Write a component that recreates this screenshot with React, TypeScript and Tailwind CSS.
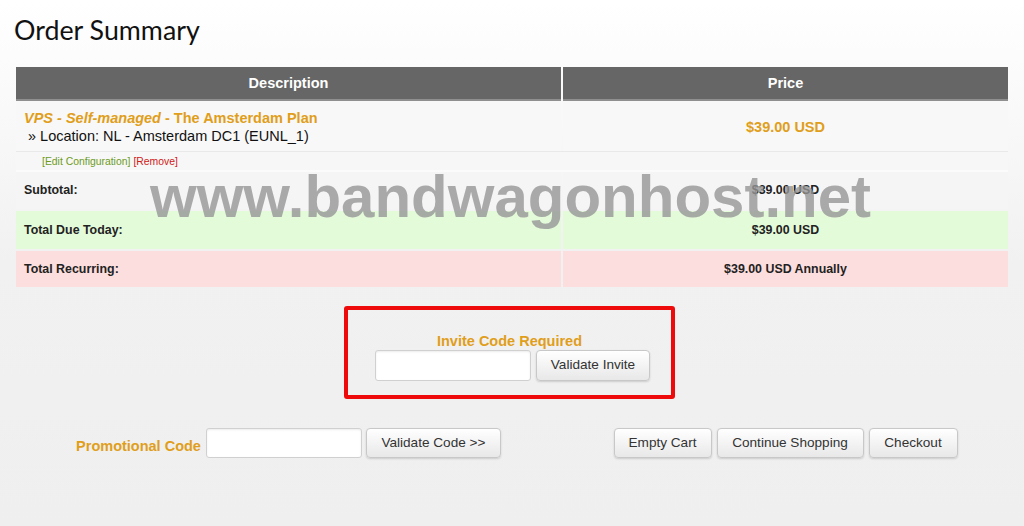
import React from "react";

const arial = { fontFamily: '"Liberation Sans", Arial, sans-serif' };

function Btn({ children, w }: { children: React.ReactNode; w: string }) {
  return (
    <button
      className={`${w} h-[30px] rounded-[4px] border border-[#c8c8c8] bg-gradient-to-b from-[#ffffff] to-[#e8e8e8] text-[13.6px] text-[#333] shadow-[0_1px_2px_rgba(0,0,0,0.15)]`}
    >
      {children}
    </button>
  );
}

export default function App() {
  return (
    <div
      className="relative min-h-[526px] w-[1024px] overflow-hidden bg-gradient-to-b from-[#ffffff] via-[#f1f1f1] to-[#efefef]"
      style={arial}
    >
      <h1
        className="pl-[14px] pt-[14px] text-[26.8px] leading-[32px] text-[#111]"
        style={{ fontFamily: 'Lato, "Open Sans", sans-serif' }}
      >
        Order Summary
      </h1>

      <div className="ml-[16px] mt-[21px] w-[992px]">
        {/* header */}
        <div className="grid grid-cols-[545px_445px] gap-x-[2px]">
          <div className="flex h-[34px] items-center justify-center border-b-2 border-[#8f8f8f] bg-[#666666] pt-[1px] text-[14.5px] font-bold text-white">
            Description
          </div>
          <div className="flex h-[34px] items-center justify-center border-b-2 border-[#8f8f8f] bg-[#666666] pt-[1px] text-[14.5px] font-bold text-white">
            Price
          </div>
        </div>

        {/* product row */}
        <div className="grid grid-cols-[545px_445px] gap-x-[2px] border-b border-[#e9e9e9]">
          <div className="h-[50px] bg-[#f8f8f8] pl-[8px] pt-[9px] text-[14.5px] leading-[17.5px]">
            <div className="font-bold text-[#e09e1a]">
              <i>VPS - Self-managed</i> - The Amsterdam Plan
            </div>
            <div className="text-[#111]">&nbsp;» Location: NL - Amsterdam DC1 (EUNL_1)</div>
          </div>
          <div className="flex h-[50px] items-center justify-center bg-[#f8f8f8] pt-[3px] text-[14.5px] font-bold text-[#e09e1a]">
            $39.00 USD
          </div>
        </div>

        {/* edit row */}
        <div className="flex h-[20px] items-center border-b-2 border-[#fbfbfb] bg-[#f7f7f7] pl-[26px] pt-[2px] text-[10.4px]">
          <span className="text-[#6e9b1e]">[Edit Configuration]</span>
          <span className="ml-[3px] text-[#d01818]">[Remove]</span>
        </div>

        {/* subtotal */}
        <div className="grid grid-cols-[545px_445px] gap-x-[2px] text-[12.4px] font-bold text-[#222]">
          <div className="flex h-[37px] items-center bg-[#f5f5f5] pl-[8px]">Subtotal:</div>
          <div className="flex h-[37px] items-center justify-center bg-[#f5f5f5]">$39.00 USD</div>
        </div>
        <div className="grid grid-cols-[545px_445px] gap-x-[2px] pt-[2px] text-[12.4px] font-bold text-[#222]">
          <div className="flex h-[38px] items-center bg-[#e4fbda] pl-[8px]">Total Due Today:</div>
          <div className="flex h-[38px] items-center justify-center bg-[#e4fbda]">$39.00 USD</div>
        </div>
        <div className="grid grid-cols-[545px_445px] gap-x-[2px] pt-[2px] text-[12.4px] font-bold text-[#222]">
          <div className="flex h-[36px] items-center bg-[#fddede] pl-[8px]">Total Recurring:</div>
          <div className="flex h-[36px] items-center justify-center bg-[#fddede]">$39.00 USD Annually</div>
        </div>
      </div>

      {/* invite box */}
      <div className="mt-[19px] flex justify-center pr-[5px]">
        <div className="flex w-[331px] flex-col items-center rounded-[3px] border-4 border-[#ee0a0a] pb-[14px] pt-[23px]">
          <div className="text-[14.5px] font-bold leading-[17px] text-[#e09e1a]">Invite Code Required</div>
          <div className="flex gap-[5px] pl-[6px]">
            <input className="h-[31px] w-[156px] rounded-[3px] border border-[#d0d0d0] bg-white shadow-[inset_0_1px_2px_rgba(0,0,0,0.08)]" />
            <button className="h-[31px] w-[114px] rounded-[4px] border border-[#c8c8c8] bg-gradient-to-b from-[#ffffff] to-[#e8e8e8] text-[13.6px] text-[#333] shadow-[0_1px_2px_rgba(0,0,0,0.15)]">
              Validate Invite
            </button>
          </div>
        </div>
      </div>

      {/* bottom row */}
      <div className="ml-[16px] mt-[29px] grid w-[992px] grid-cols-[545px_445px] gap-x-[2px]">
        <div className="flex items-center justify-center">
          <span className="mr-[5px] mt-[8px] text-[14.5px] font-bold text-[#e09e1a]">Promotional Code</span>
          <input className="h-[30px] w-[156px] rounded-[3px] border border-[#d0d0d0] bg-white shadow-[inset_0_1px_2px_rgba(0,0,0,0.08)]" />
          <div className="ml-[4px]">
            <Btn w="w-[135px]">Validate Code &gt;&gt;</Btn>
          </div>
        </div>
        <div className="flex items-center justify-center gap-[5px]">
          <Btn w="w-[98px]">Empty Cart</Btn>
          <Btn w="w-[147px]">Continue Shopping</Btn>
          <Btn w="w-[89px]">Checkout</Btn>
        </div>
      </div>

      {/* watermark */}
      <div className="pointer-events-none absolute left-[150px] top-[167px] whitespace-nowrap text-[60px] font-bold leading-[60px] text-[rgba(150,150,150,0.8)]">
        www.bandwagonhost.net
      </div>
    </div>
  );
}
